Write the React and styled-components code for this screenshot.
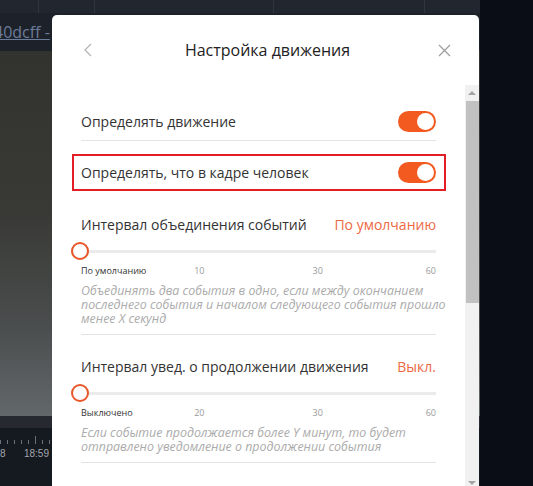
import styled, { createGlobalStyle } from "styled-components";

const GlobalStyle = createGlobalStyle`
  html, body {
    margin: 0;
    padding: 0;
  }
  body {
    width: 533px;
    height: 486px;
    overflow: hidden;
    background: #0a0d15;
    font-family: "Open Sans", "Noto Sans", sans-serif;
  }
`;

const Page = styled.div`
  position: relative;
  width: 533px;
  height: 486px;
  overflow: hidden;
  display: flex;
`;

/* player behind the dialog */
const Player = styled.div`
  width: 480px;
  height: 100%;
  display: flex;
  flex-direction: column;
`;

const TopBar = styled.div`
  height: 13px;
  background: #22262e;
  display: flex;
`;

const TopCell = styled.div`
  width: ${(p) => p.$w}px;
  border-right: 1px solid #30343c;
`;

const LinkBar = styled.div`
  height: 38px;
  background: #1d2129;
  display: flex;
  align-items: center;
  overflow: hidden;
`;

const LinkText = styled.span`
  margin-left: -6px;
  color: #6c7c9b;
  font-size: 16px;
  text-decoration: underline;
  white-space: nowrap;
`;

const Video = styled.div`
  flex: 1;
  background: linear-gradient(180deg, #32332f 0%, #393a36 45%, #4a4d4d 75%, #62676a 100%);
`;

const SeekBar = styled.div`
  height: 12px;
  background: #26292f;
`;

const Timeline = styled.div`
  height: 58px;
  background: #151920;
  display: flex;
  flex-direction: column;
  padding-top: 8px;
  box-sizing: border-box;
`;

const Ticks = styled.div`
  display: flex;
  gap: 6px;
  height: 8px;
  align-items: flex-end;
`;

const Tick = styled.div`
  width: 1px;
  height: ${(p) => (p.$long ? 8 : 4)}px;
  background: #6d7079;
`;

const TimeRow = styled.div`
  display: flex;
  justify-content: space-between;
  width: 49px;
  margin-top: 4px;
  color: #a3a6ad;
  font-size: 10px;
  font-family: "Liberation Sans", sans-serif;
`;

/* dialog */
const Modal = styled.div`
  position: absolute;
  left: 52px;
  top: 15px;
  width: 427px;
  bottom: -4px;
  background: #fff;
  border-radius: 5px 5px 0 0;
  display: flex;
  flex-direction: column;
`;

const Header = styled.div`
  height: 70px;
  flex-shrink: 0;
  display: grid;
  grid-template-columns: 1fr auto 1fr;
  align-items: center;
  padding: 0 28px 0 32px;
`;

const Title = styled.div`
  font-size: 16px;
  color: #222;
`;

const IconButton = styled.div`
  display: flex;
  justify-self: ${(p) => p.$side};
`;

const Body = styled.div`
  flex: 1;
  min-height: 0;
  display: flex;
`;

const Content = styled.div`
  flex: 1;
  overflow: hidden;
  padding: 17px 29px 0 29px;
`;

const ToggleRow = styled.div`
  display: flex;
  justify-content: space-between;
  align-items: center;
  height: ${(p) => p.$h || 38}px;
  margin-top: ${(p) => p.$mt || 0}px;
  border-bottom: ${(p) => (p.$line ? "1px solid #e4e4e4" : "none")};
  font-size: 14px;
  color: #333;
`;

const Highlight = styled.div`
  margin: 13px -10px 2px -9px;
  border: 2px solid #e41e26;
  padding: 0 8px 0 7px;
`;

const Switch = styled.div`
  width: 38px;
  height: 21px;
  border-radius: 11px;
  background: #f25a1f;
  display: flex;
  align-items: center;
  justify-content: flex-end;
  padding: 0 2px;
  box-sizing: border-box;
`;

const Knob = styled.div`
  width: 17px;
  height: 17px;
  border-radius: 50%;
  background: #fff;
`;

const Section = styled.div`
  padding: 21px 0 8px;
  border-bottom: 1px solid #e4e4e4;
`;

const SectionHead = styled.div`
  height: 20px;
  display: flex;
  justify-content: space-between;
  align-items: center;
  font-size: 14px;
  color: #333;
`;

const Value = styled.span`
  color: #ec6842;
`;

const Slider = styled.div`
  position: relative;
  margin-top: 8px;
  height: 18px;
  display: flex;
  align-items: center;
`;

const Track = styled.div`
  flex: 1;
  height: 3px;
  background: #ebebeb;
`;

const Thumb = styled.div`
  position: absolute;
  left: -10px;
  top: 0;
  width: 18px;
  height: 18px;
  box-sizing: border-box;
  border: 2px solid #e8572a;
  border-radius: 50%;
  background: #fff;
`;

const Labels = styled.div`
  margin-top: 5px;
  height: 12px;
  display: flex;
  justify-content: space-between;
  font-size: 9px;
  line-height: 12px;
`;

const Stop = styled.div`
  width: 0;
  display: flex;
  justify-content: ${(p) => p.$align};
  white-space: nowrap;
  color: ${(p) => (p.$active ? "#333" : "#9a9a9a")};
`;

const Desc = styled.div`
  margin-top: 7px;
  font-size: 12.4px;
  line-height: 14px;
  font-style: italic;
  color: #ababab;
  white-space: nowrap;
`;

const ScrollBar = styled.div`
  width: 14px;
  flex-shrink: 0;
  background: #f1f1f1;
  display: flex;
  flex-direction: column;
  align-items: center;
`;

const Arrow = styled.div`
  height: 15px;
  width: 100%;
  display: flex;
  align-items: center;
  justify-content: center;

  &::before {
    content: "";
    border-left: 4px solid transparent;
    border-right: 4px solid transparent;
    ${(p) => (p.$down ? "border-top" : "border-bottom")}: 4px solid #a3a3a3;
  }
`;

const ScrollThumb = styled.div`
  width: 13px;
  height: 202px;
  margin-top: 1px;
  background: #c1c1c1;
`;

const Spacer = styled.div`
  flex: 1;
`;

const Toggle = () => (
  <Switch>
    <Knob />
  </Switch>
);

const IntervalSection = ({ title, value, stops, children }) => (
  <Section>
    <SectionHead>
      <span>{title}</span>
      <Value>{value}</Value>
    </SectionHead>
    <Slider>
      <Track />
      <Thumb />
    </Slider>
    <Labels>
      {stops.map((s, i) => (
        <Stop
          key={s}
          $active={i === 0}
          $align={i === 0 ? "flex-start" : i === stops.length - 1 ? "flex-end" : "center"}
        >
          {s}
        </Stop>
      ))}
    </Labels>
    <Desc>{children}</Desc>
  </Section>
);

const App = () => {
  const ticks = [0, 1, 2, 3, 4, 5, 6, 7];

  return (
    <Page>
      <GlobalStyle />
      <Player>
        <TopBar>
          <TopCell $w={38} />
          <TopCell $w={55} />
          <TopCell $w={178} />
          <TopCell $w={150} />
        </TopBar>
        <LinkBar>
          <LinkText>40dcff - </LinkText>
        </LinkBar>
        <Video />
        <SeekBar />
        <Timeline>
          <Ticks>
            {ticks.map((t) => (
              <Tick key={t} $long={t === 5} />
            ))}
          </Ticks>
          <TimeRow>
            <span>8</span>
            <span>18:59</span>
          </TimeRow>
        </Timeline>
      </Player>

      <Modal>
        <Header>
          <IconButton $side="start">
            <svg width="8" height="14" viewBox="0 0 8 14">
              <polyline points="7,1 1,7 7,13" fill="none" stroke="#b3b3b3" strokeWidth="1.2" />
            </svg>
          </IconButton>
          <Title>Настройка движения</Title>
          <IconButton $side="end">
            <svg width="13" height="13" viewBox="0 0 13 13">
              <path d="M1 1 L12 12 M12 1 L1 12" stroke="#9c9c9c" strokeWidth="1.2" />
            </svg>
          </IconButton>
        </Header>
        <Body>
          <Content>
            <ToggleRow $line>
              <span>Определять движение</span>
              <Toggle />
            </ToggleRow>
            <Highlight>
              <ToggleRow $h={33}>
                <span>Определять, что в кадре человек</span>
                <Toggle />
              </ToggleRow>
            </Highlight>
            <IntervalSection
              title="Интервал объединения событий"
              value="По умолчанию"
              stops={["По умолчанию", "10", "30", "60"]}
            >
              Объединять два события в одно, если между окончанием
              <br />
              последнего события и началом следующего события прошло
              <br />
              менее X секунд
            </IntervalSection>
            <IntervalSection
              title="Интервал увед. о продолжении движения"
              value="Выкл."
              stops={["Выключено", "20", "30", "60"]}
            >
              Если событие продолжается более Y минут, то будет
              <br />
              отправлено уведомление о продолжении события
            </IntervalSection>
            <ToggleRow $mt={14}>
              <span>Уведомлять о движении</span>
              <Toggle />
            </ToggleRow>
          </Content>
          <ScrollBar>
            <Arrow />
            <ScrollThumb />
            <Spacer />
            <Arrow $down />
          </ScrollBar>
        </Body>
      </Modal>
    </Page>
  );
};

export default App;
